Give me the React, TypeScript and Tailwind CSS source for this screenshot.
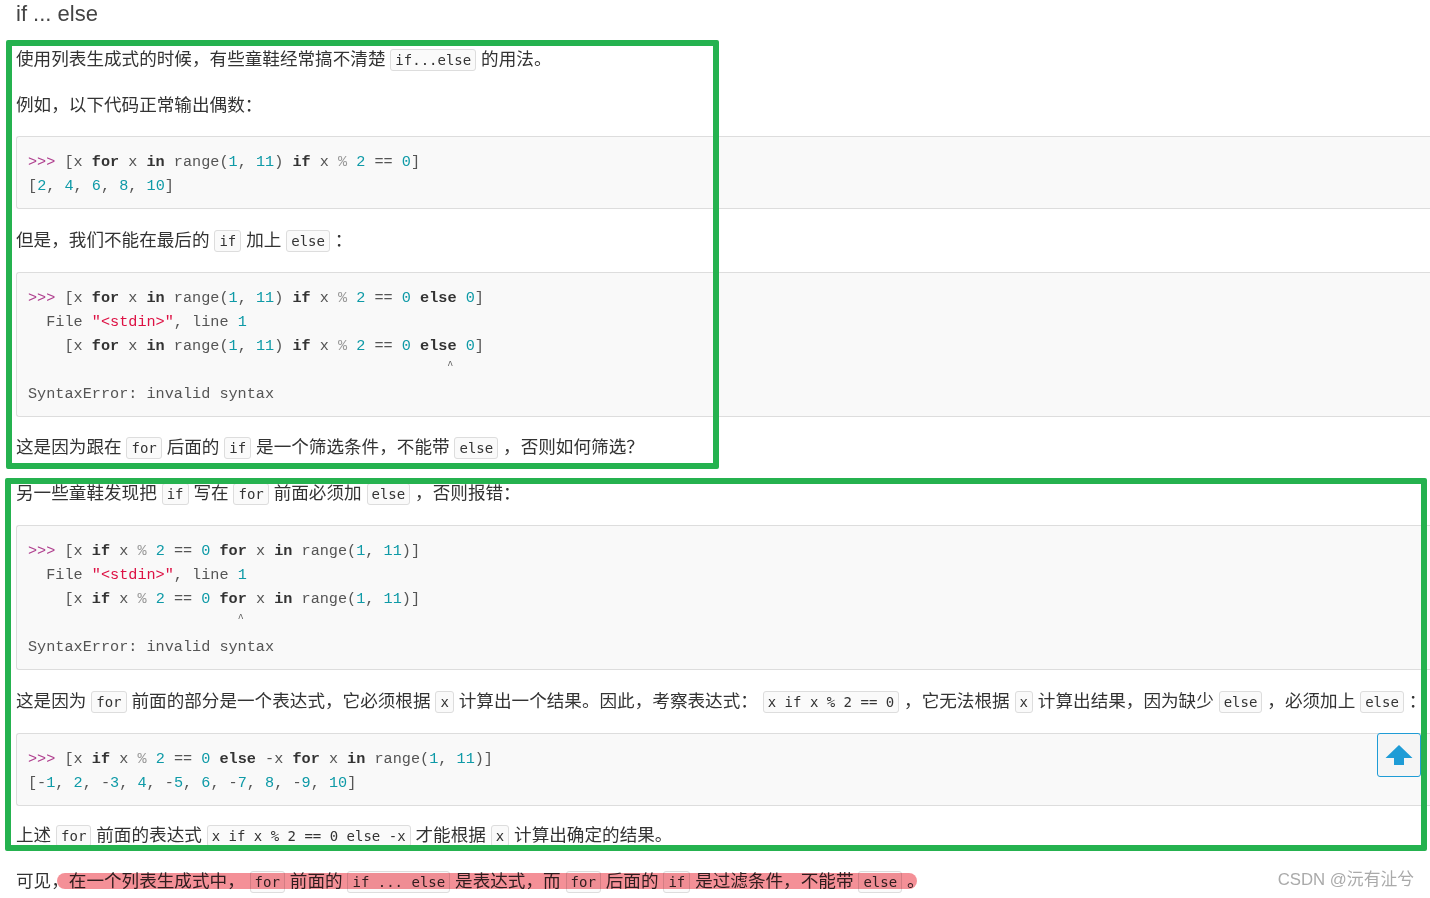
import type { ReactNode } from 'react';

const textFont = '[font-family:"Liberation_Sans","Noto_Sans_CJK_SC",sans-serif]';

// inline code chip
function C({ children }: { children: ReactNode }) {
  return (
    <code className="rounded-[3px] border border-[#dddddd] bg-[#fafafa] px-[4px] py-[2px] text-[14px] leading-[18px] text-[#333333] [font-family:'DejaVu_Sans_Mono',monospace]">
      {children}
    </code>
  );
}

function P({ children }: { children: ReactNode }) {
  return <p className="mb-5 h-[26px] whitespace-nowrap leading-[26px]">{children}</p>;
}

function Pre({ children, className }: { children: ReactNode; className: string }) {
  return (
    <pre className={`rounded-l-[3px] border-y border-l border-[#dddddd] bg-[#f9f9f9] pb-[10px] pl-[11px] pt-[13px] text-[15.2px] leading-6 text-[#555555] [font-family:'Liberation_Mono',monospace] ${className}`}>
      {children}
    </pre>
  );
}

const K = ({ children }: { children: ReactNode }) => <b className="font-bold text-[#333333]">{children}</b>;
const N = ({ children }: { children: ReactNode }) => <span className="text-[#0e9aa7]">{children}</span>;
const M = ({ children }: { children: ReactNode }) => <span className="text-[#999999]">{children}</span>;
const Prompt = () => <span className="text-[#b0408f]">&gt;&gt;&gt; </span>;
const Str = () => <span className="text-[#dd1144]">"&lt;stdin&gt;"</span>;
const Caret = () => <span className="align-[6px] text-[10px] leading-none">^</span>;

function App() {
  return (
    <div className={`relative h-[898px] w-[1430px] overflow-hidden bg-white pl-[16px] text-[17.6px] text-[#333333] ${textFont}`}>
      <h4 className="mb-5 h-[26px] text-[22px] leading-[28px] text-[#444444]">if ... else</h4>

      <P>使用列表生成式的时候，有些童鞋经常搞不清楚 <C>if...else</C> 的用法。</P>
      <P>例如，以下代码正常输出偶数：</P>
      <Pre className="-mt-[2px] mb-[18px]">
        <Prompt />[x <K>for</K> x <K>in</K> range(<N>1</N>, <N>11</N>) <K>if</K> x <M>%</M> <N>2</N> == <N>0</N>]{'\n'}
        [<N>2</N>, <N>4</N>, <N>6</N>, <N>8</N>, <N>10</N>]
      </Pre>

      <P>但是，我们不能在最后的 <C>if</C> 加上 <C>else</C> ：</P>
      <Pre className="-mt-[1px] mb-[17px]">
        <Prompt />[x <K>for</K> x <K>in</K> range(<N>1</N>, <N>11</N>) <K>if</K> x <M>%</M> <N>2</N> == <N>0</N> <K>else</K> <N>0</N>]{'\n'}
        {'  '}File <Str />, line <N>1</N>{'\n'}
        {'    '}[x <K>for</K> x <K>in</K> range(<N>1</N>, <N>11</N>) <K>if</K> x <M>%</M> <N>2</N> == <N>0</N> <K>else</K> <N>0</N>]{'\n'}
        {'                                              '}<Caret />{'\n'}
        SyntaxError: invalid syntax
      </Pre>

      <P>这是因为跟在 <C>for</C> 后面的 <C>if</C> 是一个筛选条件，不能带 <C>else</C> ，否则如何筛选？</P>
      <P>另一些童鞋发现把 <C>if</C> 写在 <C>for</C> 前面必须加 <C>else</C> ，否则报错：</P>
      <Pre className="-mt-[1px] mb-[18px]">
        <Prompt />[x <K>if</K> x <M>%</M> <N>2</N> == <N>0</N> <K>for</K> x <K>in</K> range(<N>1</N>, <N>11</N>)]{'\n'}
        {'  '}File <Str />, line <N>1</N>{'\n'}
        {'    '}[x <K>if</K> x <M>%</M> <N>2</N> == <N>0</N> <K>for</K> x <K>in</K> range(<N>1</N>, <N>11</N>)]{'\n'}
        {'                       '}<Caret />{'\n'}
        SyntaxError: invalid syntax
      </Pre>

      <P>这是因为 <C>for</C> 前面的部分是一个表达式，它必须根据 <C>x</C> 计算出一个结果。因此，考察表达式： <C>x if x % 2 == 0</C> ，它无法根据 <C>x</C> 计算出结果，因为缺少 <C>else</C> ，必须加上 <C>else</C> ：</P>
      <Pre className="-mt-[1px] mb-[16px]">
        <Prompt />[x <K>if</K> x <M>%</M> <N>2</N> == <N>0</N> <K>else</K> -x <K>for</K> x <K>in</K> range(<N>1</N>, <N>11</N>)]{'\n'}
        [-<N>1</N>, <N>2</N>, -<N>3</N>, <N>4</N>, -<N>5</N>, <N>6</N>, -<N>7</N>, <N>8</N>, -<N>9</N>, <N>10</N>]
      </Pre>

      <P>上述 <C>for</C> 前面的表达式 <C>x if x % 2 == 0 else -x</C> 才能根据 <C>x</C> 计算出确定的结果。</P>
      <P>可见，在一个列表生成式中， <C>for</C> 前面的 <C>if ... else</C> 是表达式，而 <C>for</C> 后面的 <C>if</C> 是过滤条件，不能带 <C>else</C> 。</P>

      {/* annotations drawn over the page */}
      <div className="absolute left-[6px] top-[40px] h-[429px] w-[713px] rounded-[2px] border-[6px] border-[#25b24f]" />
      <div className="absolute left-[5px] top-[478px] h-[373px] w-[1422px] rounded-[2px] border-[6px] border-[#25b24f]" />
      <div className="absolute left-[57px] top-[873px] h-[16px] w-[860px] rounded-full bg-[#f0606a] opacity-70 mix-blend-multiply" />

      <button className="absolute left-[1377px] top-[733px] flex h-[44px] w-[44px] items-center justify-center rounded-[3px] border border-[#1f9cd6] bg-[#f5f5f5]">
        <svg width="28" height="22" viewBox="0 0 28 22">
          <path d="M14 1 L27.5 14 L19 14 L19 21 L9 21 L9 14 L0.5 14 Z" fill="#1f9cd6" />
        </svg>
      </button>

      <div className="absolute right-[16px] top-[868px] text-[16.8px] leading-6 text-[#aaaaaa]">CSDN @沅有沚兮</div>
    </div>
  );
}

export default App;
